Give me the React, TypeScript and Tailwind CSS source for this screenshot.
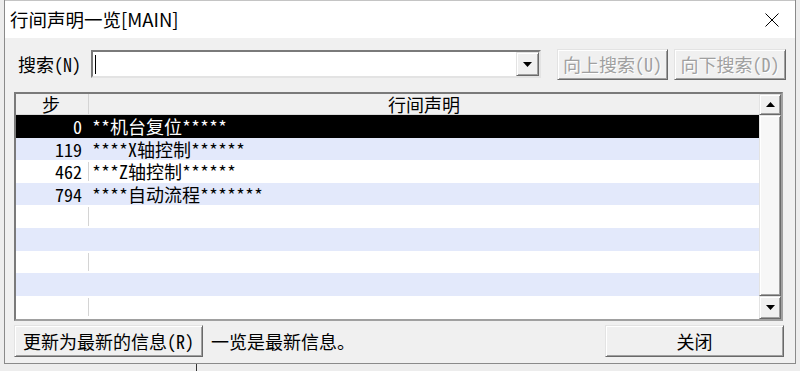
import React from "react";

// Windows-style "行间声明一览" dialog: search bar, step/comment list, footer buttons.

const rows = [
    { step: "0", text: "**机台复位*****" },
    { step: "119", text: "****X轴控制******" },
    { step: "462", text: "***Z轴控制******" },
    { step: "794", text: "****自动流程*******" },
    null,
    null,
    null,
    null,
    null,
];

const raised =
    "border border-t-[#e3e3e3] border-l-[#e3e3e3] border-b-[#696969] border-r-[#696969] shadow-[inset_1px_1px_0_#ffffff,inset_-1px_-1px_0_#a0a0a0] bg-[#f0f0f0]";

function Triangle({ up }: { up?: boolean }) {
    return (
        <svg width="9" height="5" viewBox="0 0 9 5">
            {up ? <path d="M0 5 L4.5 0 L9 5 Z" fill="#000" /> : <path d="M0 0 L9 0 L4.5 5 Z" fill="#000" />}
        </svg>
    );
}

export default function App() {
    const font = "font-['Noto_Sans_CJK_SC',sans-serif] [font-feature-settings:'hwid']";

    return (
        <div className="w-[800px] h-[371px] bg-[#ededed] flex flex-col overflow-hidden">
            <div className="flex pl-[4px]">
                {/* Window */}
                <div className="w-[792px] h-[364px] border-x border-b border-[#8a8a8a] bg-[#f0f0f0] flex flex-col">
                    {/* Title bar */}
                    <div className="h-[38px] bg-white border-t border-[#c4c4c4] flex items-center justify-between pl-[5px] pr-[16px]">
                        <span className="font-['Noto_Sans_CJK_SC',sans-serif] text-[18.5px] text-black leading-none">
                            行间声明一览[MAIN]
                        </span>
                        <svg width="14" height="14" viewBox="0 0 14 14">
                            <path d="M0.5 0.5 L13.5 13.5 M13.5 0.5 L0.5 13.5" stroke="#000" strokeWidth="1" />
                        </svg>
                    </div>

                    {/* Search row */}
                    <div className={`flex items-center mt-[10px] h-[32px] pl-[13px] ${font} text-[18px] text-black`}>
                        <span className="w-[73px] leading-none">搜索(N)</span>
                        <div className="w-[450px] h-[28px] border-2 border-t-[#7a7a7a] border-l-[#7a7a7a] border-b-[#e3e3e3] border-r-[#e3e3e3] bg-white flex items-center">
                            <span className="w-px h-[19px] bg-black ml-[2px]" />
                            <div className="flex-1" />
                            <div className={`w-[23px] h-[24px] flex items-center justify-center ${raised}`}>
                                <Triangle />
                            </div>
                        </div>
                        <button className={`ml-[16px] w-[111px] h-[31px] ${raised} text-[#a0a0a0] [text-shadow:1px_1px_0_#ffffff] leading-none`}>
                            向上搜索(U)
                        </button>
                        <button className={`ml-[6px] w-[112px] h-[31px] ${raised} text-[#a0a0a0] [text-shadow:1px_1px_0_#ffffff] leading-none`}>
                            向下搜索(D)
                        </button>
                    </div>

                    {/* List */}
                    <div className={`ml-[9px] mt-[12px] w-[769px] h-[229px] border-2 border-t-[#7a7a7a] border-l-[#7a7a7a] border-b-[#a0a0a0] border-r-[#a0a0a0] bg-white flex ${font} text-[18px]`}>
                        <div className="flex-1 flex flex-col">
                            <div className="h-[21px] flex bg-[#f0f0f0] border-b border-[#d9d9d9] leading-none">
                                <div className="w-[72px] flex items-center justify-center pr-[2px]">步</div>
                                <div className="w-px bg-[#d4d4d4]" />
                                <div className="flex-1 flex items-center justify-center">行间声明</div>
                            </div>
                            {rows.map((r, i) => {
                                const selected = i === 0;
                                const blue = i % 2 === 1;
                                const bg = selected ? "bg-black text-white" : blue ? "bg-[#e3e9fb] text-black" : "bg-white text-black";
                                return (
                                    <div key={i} className={`h-[22.6px] flex items-center leading-none ${bg}`}>
                                        <div className="w-[72px] text-right pr-[6px]">{r?.step}</div>
                                        <div className={`w-px self-stretch my-[2px] ${!selected && !blue ? "bg-[#d4d4d4]" : ""}`} />
                                        <div className="flex-1 pl-[3px]">{r?.text}</div>
                                    </div>
                                );
                            })}
                        </div>
                        {/* Scrollbar */}
                        <div className="w-[22px] flex flex-col bg-[#f0f0f0]">
                            <div className={`h-[21px] flex items-center justify-center ${raised}`}>
                                <Triangle up />
                            </div>
                            <div className={`flex-1 ${raised} bg-[#f7f7f7]`} />
                            <div className={`h-[23px] flex items-center justify-center ${raised}`}>
                                <Triangle />
                            </div>
                        </div>
                    </div>

                    {/* Footer */}
                    <div className={`flex items-center mt-[4px] h-[32px] pl-[9px] ${font} text-[18px] text-black`}>
                        <button className={`w-[189px] h-[32px] ${raised} leading-none`}>更新为最新的信息(R)</button>
                        <span className="ml-[8px] leading-none">一览是最新信息。</span>
                        <div className="flex-1" />
                        <button className={`w-[179px] h-[32px] mr-[11px] ${raised} leading-none`}>关闭</button>
                    </div>
                </div>
            </div>

            {/* Behind the window */}
            <div className="flex-1 flex">
                <div className="ml-[196px] w-px bg-[#333333]" />
            </div>
        </div>
    );
}
